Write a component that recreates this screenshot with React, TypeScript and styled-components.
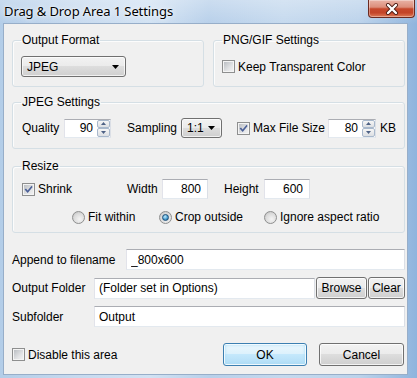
import React from 'react';
import styled, { createGlobalStyle, css } from 'styled-components';

const GlobalStyle = createGlobalStyle`
  html, body {
    margin: 0;
    padding: 0;
  }
  body {
    font-family: "Liberation Sans", Arial, sans-serif;
    font-size: 12px;
    color: #000;
  }
`;

const Window = styled.div`
  box-sizing: border-box;
  width: 417px;
  height: 378px;
  display: flex;
  flex-direction: column;
  padding: 0 9px 3px 3px;
  background:
    linear-gradient(180deg, rgba(255, 255, 255, 0.28), rgba(255, 255, 255, 0) 24px),
    linear-gradient(90deg, #b3cde8 0%, #c7daef 18%, #d2e2f3 36%, #b8d0ea 50%, #c5d9ee 68%, #bcd3eb 86%, #8fb4dd 100%);
`;

const TitleBar = styled.div`
  height: 23px;
  display: flex;
  align-items: flex-start;
  justify-content: space-between;
  margin: 0 -9px 0 -3px;
  padding: 0 2px 0 4px;
`;

const Title = styled.div`
  font-family: "Noto Sans", "Liberation Sans", sans-serif;
  font-size: 13px;
  line-height: 22px;
  letter-spacing: -0.1px;
  text-shadow: 0 0 6px rgba(255, 255, 255, 0.95), 0 0 2px rgba(255, 255, 255, 0.9);
`;

const CloseButton = styled.div`
  box-sizing: border-box;
  width: 47px;
  height: 18px;
  display: flex;
  align-items: center;
  justify-content: center;
  border: 1px solid #6b2a20;
  border-top: none;
  border-radius: 0 0 4px 4px;
  background: linear-gradient(180deg, #e9b3a6 0%, #dc8e7b 42%, #c6482c 52%, #c34428 75%, #de7a57 100%);
  box-shadow: inset 0 0 0 1px rgba(255, 255, 255, 0.35);
`;

const Client = styled.div`
  flex: 1;
  display: flex;
  flex-direction: column;
  background: #f0f0f0;
  border: 1px solid #97aec9;
  padding: 9px 2px 0 8px;
`;

const GroupRow = styled.div`
  display: grid;
  grid-template-columns: 1fr 1fr;
  column-gap: 9px;
`;

const Group = styled.fieldset<{ $mt?: number; $pt?: number; $pb?: number }>`
  margin: ${p => p.$mt ?? 0}px 0 0 0;
  min-width: 0;
  border: 1px solid #d5dfe5;
  border-radius: 3px;
  padding: ${p => p.$pt ?? 9}px 8px ${p => p.$pb ?? 9}px;
  box-shadow: inset 1px 1px 0 rgba(255, 255, 255, 0.8);
`;

const Legend = styled.legend`
  padding: 0 1px;
  line-height: 14px;
`;

const Row = styled.div<{ $mt?: number; $h?: number }>`
  display: flex;
  align-items: center;
  height: ${p => p.$h ?? 20}px;
  margin-top: ${p => p.$mt ?? 0}px;
`;

const Label = styled.span<{ $w?: number; $ml?: number }>`
  flex: none;
  width: ${p => (p.$w ? `${p.$w}px` : 'auto')};
  margin-left: ${p => p.$ml ?? 0}px;
  white-space: nowrap;
`;

const fieldBorder = css`
  box-sizing: border-box;
  border: 1px solid;
  border-color: #abadb3 #dbdfe6 #e3e9ef #e2e3ea;
  background: #fff;
`;

const TextBox = styled.input<{ $w?: number; $h?: number; $right?: boolean }>`
  ${fieldBorder};
  flex: ${p => (p.$w ? 'none' : '1')};
  min-width: 0;
  width: ${p => (p.$w ? `${p.$w}px` : 'auto')};
  height: ${p => p.$h ?? 21}px;
  margin: 0;
  padding: 0 ${p => (p.$right ? 6 : 4)}px 0 4px;
  font: inherit;
  color: #000;
  text-align: ${p => (p.$right ? 'right' : 'left')};
  outline: none;
`;

const SpinBox = styled.div<{ $w: number }>`
  ${fieldBorder};
  flex: none;
  display: flex;
  width: ${p => p.$w}px;
  height: 19px;
`;

const SpinValue = styled.span`
  flex: 1;
  text-align: right;
  padding-right: 4px;
  line-height: 17px;
`;

const SpinButtons = styled.div`
  display: flex;
  flex-direction: column;
  width: 13px;
`;

const SpinButton = styled.div`
  flex: 1;
  display: flex;
  align-items: center;
  justify-content: center;
  border: 1px solid #a8b8cc;
  border-radius: 2px;
  background: linear-gradient(180deg, #f6f6f6, #dcdfe3);
`;

const Combo = styled.div<{ $w: number; $h: number }>`
  box-sizing: border-box;
  flex: none;
  width: ${p => p.$w}px;
  height: ${p => p.$h}px;
  display: flex;
  align-items: center;
  justify-content: space-between;
  padding: 0 6px 0 5px;
  border: 1px solid #707070;
  border-radius: 3px;
  background: linear-gradient(180deg, #f2f2f2 0%, #ebebeb 49%, #dddddd 50%, #cfcfcf 100%);
  box-shadow: inset 0 0 0 1px rgba(255, 255, 255, 0.7);
`;

const Choice = styled.label<{ $w?: number; $ml?: number }>`
  flex: none;
  display: flex;
  align-items: center;
  gap: 3px;
  width: ${p => (p.$w ? `${p.$w}px` : 'auto')};
  margin-left: ${p => p.$ml ?? 0}px;
  white-space: nowrap;
`;

const CheckBox = styled.span`
  box-sizing: border-box;
  flex: none;
  width: 13px;
  height: 13px;
  display: flex;
  align-items: center;
  justify-content: center;
  border: 1px solid #8e8f8f;
  background: linear-gradient(135deg, #b4b8bd 0%, #e2e3e5 60%, #f4f4f4 100%);
  box-shadow: inset 0 0 0 1px #f4f4f4;
`;

const RadioCircle = styled.span`
  box-sizing: border-box;
  flex: none;
  width: 13px;
  height: 13px;
  display: flex;
  align-items: center;
  justify-content: center;
  border-radius: 50%;
  border: 1px solid #8e8f8f;
  background: radial-gradient(circle at 60% 65%, #f4f4f4 0%, #dcdcdc 55%, #b9b9b9 100%);
`;

const RadioDot = styled.span`
  width: 5px;
  height: 5px;
  border-radius: 50%;
  border: 1px solid #1d4f78;
  background: radial-gradient(circle at 40% 35%, #c4ecfd 0%, #4b9fd1 55%, #1c5c8c 100%);
`;

const Button = styled.button<{ $w: number; $h: number; $ml?: number; $default?: boolean }>`
  box-sizing: border-box;
  flex: none;
  width: ${p => p.$w}px;
  height: ${p => p.$h}px;
  margin: 0 0 0 ${p => p.$ml ?? 0}px;
  padding: 0;
  font: inherit;
  color: #000;
  border: 1px solid #707070;
  border-radius: 3px;
  background: linear-gradient(180deg, #f2f2f2 0%, #ebebeb 49%, #dddddd 50%, #cfcfcf 100%);
  box-shadow: inset 0 0 0 1px rgba(255, 255, 255, 0.75);
  ${p => p.$default && css`
    border-color: #3c7fb1;
    background: linear-gradient(180deg, #ecf7fd 0%, #dcf1fc 49%, #c4e8fc 50%, #b0dcf5 100%);
    box-shadow: inset 0 0 0 1px rgba(255, 255, 255, 0.8), inset 0 0 3px 1px #a6dcf6;
  `}
`;

const FieldRow = styled.div<{ $mt: number }>`
  display: flex;
  align-items: center;
  margin-top: ${p => p.$mt}px;
`;

const Footer = styled.div`
  display: flex;
  align-items: center;
  justify-content: space-between;
  margin-top: 16px;
  padding-right: 1px;
`;

const ButtonGroup = styled.div`
  display: flex;
`;

const Check: React.FC<{ checked?: boolean; w?: number; ml?: number; children: React.ReactNode }> = ({ checked, w, ml, children }) => (
  <Choice $w={w} $ml={ml}>
    <CheckBox>
      {checked && (
        <svg width="9" height="9" viewBox="0 0 9 9">
          <path d="M0.6 4.6 L2 3.4 L3.6 5.4 L7.6 0.8 L8.6 2 L3.7 7.9 Z" fill="#4a5f97" />
        </svg>
      )}
    </CheckBox>
    <span>{children}</span>
  </Choice>
);

const Radio: React.FC<{ checked?: boolean; w?: number; ml?: number; children: React.ReactNode }> = ({ checked, w, ml, children }) => (
  <Choice $w={w} $ml={ml}>
    <RadioCircle>{checked && <RadioDot />}</RadioCircle>
    <span>{children}</span>
  </Choice>
);

const Arrow = () => (
  <svg width="7" height="4" viewBox="0 0 7 4">
    <path d="M0 0 H7 L3.5 4 Z" fill="#000" />
  </svg>
);

const Spin: React.FC<{ w: number; value: string }> = ({ w, value }) => (
  <SpinBox $w={w}>
    <SpinValue>{value}</SpinValue>
    <SpinButtons>
      <SpinButton>
        <svg width="5" height="3" viewBox="0 0 5 3"><path d="M0 3 L2.5 0 L5 3 Z" fill="#4d6185" /></svg>
      </SpinButton>
      <SpinButton>
        <svg width="5" height="3" viewBox="0 0 5 3"><path d="M0 0 L5 0 L2.5 3 Z" fill="#4d6185" /></svg>
      </SpinButton>
    </SpinButtons>
  </SpinBox>
);

export default function App() {
  return (
    <>
      <GlobalStyle />
      <Window>
        <TitleBar>
          <Title>Drag &amp; Drop Area 1 Settings</Title>
          <CloseButton>
            <svg width="14" height="12" viewBox="0 0 14 12">
              <path d="M3 2 L11 10 M11 2 L3 10" stroke="#4a1a12" strokeWidth="4" strokeLinecap="round" />
              <path d="M3 2 L11 10 M11 2 L3 10" stroke="#fff" strokeWidth="2.4" strokeLinecap="round" />
            </svg>
          </CloseButton>
        </TitleBar>
        <Client>
          <GroupRow>
            <Group>
              <Legend>Output Format</Legend>
              <Row $h={21}>
                <Combo $w={105} $h={21}>
                  <span>JPEG</span>
                  <Arrow />
                </Combo>
              </Row>
            </Group>
            <Group>
              <Legend>PNG/GIF Settings</Legend>
              <Row $h={21}>
                <Check>Keep Transparent Color</Check>
              </Row>
            </Group>
          </GroupRow>

          <Group $mt={8} $pb={10}>
            <Legend>JPEG Settings</Legend>
            <Row>
              <Label $w={42} $ml={1}>Quality</Label>
              <Spin w={47} value="90" />
              <Label $w={54} $ml={16}>Sampling</Label>
              <Combo $w={41} $h={20}>
                <span>1:1</span>
                <Arrow />
              </Combo>
              <Check checked ml={15} w={91}>Max File Size</Check>
              <Spin w={48} value="80" />
              <Label $ml={4}>KB</Label>
            </Row>
          </Group>

          <Group $mt={10} $pt={6} $pb={5}>
            <Legend>Resize</Legend>
            <Row>
              <Check checked ml={1} w={105}>Shrink</Check>
              <Label $w={35}>Width</Label>
              <TextBox $w={46} $h={20} $right readOnly value="800" />
              <Label $w={40} $ml={16}>Height</Label>
              <TextBox $w={46} $h={20} $right readOnly value="600" />
            </Row>
            <Row $mt={8}>
              <Radio ml={51} w={87}>Fit within</Radio>
              <Radio checked w={105}>Crop outside</Radio>
              <Radio>Ignore aspect ratio</Radio>
            </Row>
          </Group>

          <FieldRow $mt={16}>
            <Label $w={114}>Append to filename</Label>
            <TextBox readOnly value="_800x600" />
          </FieldRow>
          <FieldRow $mt={7}>
            <Label $w={82}>Output Folder</Label>
            <TextBox readOnly value="(Folder set in Options)" />
            <Button $w={51} $h={22} $ml={1}>Browse</Button>
            <Button $w={37} $h={22} $ml={1}>Clear</Button>
          </FieldRow>
          <FieldRow $mt={7}>
            <Label $w={82}>Subfolder</Label>
            <TextBox readOnly value="Output" />
          </FieldRow>

          <Footer>
            <Check>Disable this area</Check>
            <ButtonGroup>
              <Button $default $w={84} $h={23}>OK</Button>
              <Button $w={85} $h={23} $ml={12}>Cancel</Button>
            </ButtonGroup>
          </Footer>
        </Client>
      </Window>
    </>
  );
}
